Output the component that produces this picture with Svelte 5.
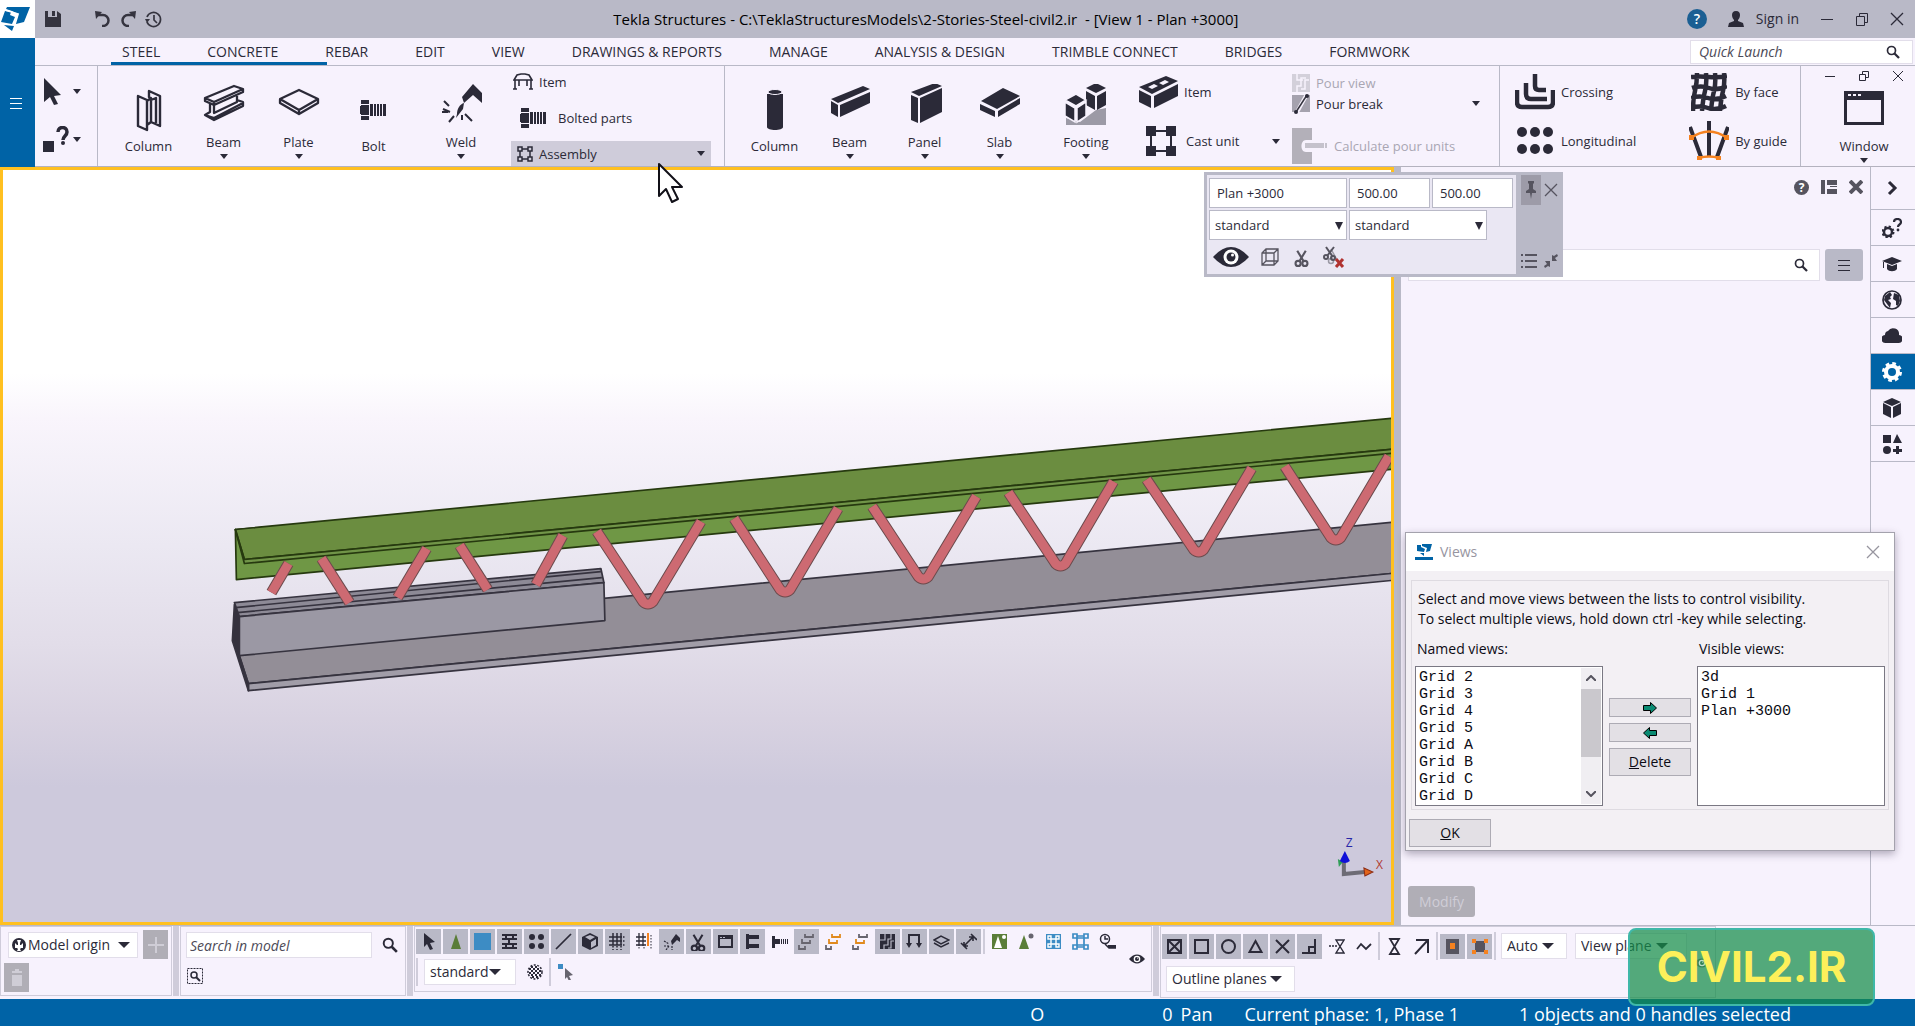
<script>
  const tabs = ['STEEL', 'CONCRETE', 'REBAR', 'EDIT', 'VIEW', 'DRAWINGS & REPORTS', 'MANAGE', 'ANALYSIS & DESIGN', 'TRIMBLE CONNECT', 'BRIDGES', 'FORMWORK'];

  const steelTools = [
    { name: 'Column', icon: 'steelColumn' },
    { name: 'Beam', icon: 'steelBeam', menu: true },
    { name: 'Plate', icon: 'plate', menu: true },
    { name: 'Bolt', icon: 'bolt' },
    { name: 'Weld', icon: 'weld', menu: true, wide: true },
  ];

  const concreteTools = [
    { name: 'Column', icon: 'column' },
    { name: 'Beam', icon: 'beam', menu: true },
    { name: 'Panel', icon: 'panel', menu: true },
    { name: 'Slab', icon: 'slab', menu: true },
    { name: 'Footing', icon: 'footing', menu: true, wide: true },
  ];

  const switches = [
    ['pointer', 1, 'Select all'], ['cone', 1, 'Components'], ['blue', 1, 'Parts'], ['mesh', 1, 'Surfaces'],
    ['dots', 1, 'Points'], ['slash', 1, 'Lines'], ['cube', 1, 'Reference models'], ['grid', 1, 'Grids'],
    ['gridLine', 0, 'Grid lines'], ['torch', 1, 'Welds'], ['cut', 1, 'Cuts'], ['view', 1, 'Views'],
    ['fitting', 1, 'Bolt groups'], ['screw', 0, 'Single bolts'], ['steps', 1, 'Rebar sets'], ['stepsA', 0, 'Rebar groups'],
    ['stepsB', 0, 'Single bars'], ['pour', 1, 'Pours'], ['loads', 1, 'Loads'], ['layers', 1, 'Planes'], ['distance', 1, 'Distances'],
  ];

  const modes = [
    ['coneBox', 'Components'], ['coneDot', 'Objects in components'], ['asmBox', 'Assemblies'],
    ['asm', 'Objects in assemblies'], ['task', 'Tasks'],
  ];

  const snaps = [
    ['snapRef', 1, 'Points'], ['snapEnd', 1, 'End points'], ['snapCenter', 1, 'Centers'], ['snapMid', 1, 'Midpoints'],
    ['snapCross', 1, 'Intersections'], ['snapPerp', 1, 'Perpendicular'], ['snapExt', 0, 'Extensions'], ['snapFree', 0, 'Free'],
  ];

  const rail = [
    ['chevron', 'Collapse'], ['gearHelp', 'Help'], ['cap', 'Learning'], ['globe', 'Online'], ['cloud', 'Warehouse'],
    ['gear', 'Properties'], ['box', 'Reference models'], ['shapes', 'Applications'],
  ];

  const namedViews = ['Grid 2', 'Grid 3', 'Grid 4', 'Grid 5', 'Grid A', 'Grid B', 'Grid C', 'Grid D'];
  const visibleViews = ['3d', 'Grid 1', 'Plan +3000'];

  // diagonals of the truss, drawn twice: outline then fill
  const rods = [
    'M289 563L272 592', 'M322 558L350 602', 'M427 548L398 597', 'M460 545L488 589', 'M563 535L536 584',
    'M597 531L643 601Q648 606 653 601L701 521', 'M734 518L780 589Q785 594 790 589L838 508',
    'M872 506L918 576Q923 581 928 576L976 496', 'M1008 492L1055 563Q1060 568 1065 563L1113 481',
    'M1146 479L1193 549Q1198 554 1203 549L1251 468', 'M1284 466L1330 537Q1335 542 1340 537L1388 456',
  ];

  const scissors = '<circle cx="6" cy="17" r="3"/><circle cx="14" cy="17" r="3"/><path d="M5 2l7.500 12.500M15 2L7.500 14.500"/>';

  // [width, height, body]
  const icons = {
    logo: [29, 24, '<path fill="#0063a6" d="M6 0h23l-6 15-8 2-1-2 3-8-6-3-6-2zM4 4l6 1-1 3 5 2-3 7-11-2zM3 18l10 1-2 5z"/><path fill="none" stroke="#fff" stroke-width="1.800" d="M4 3l13 4-3 10"/>'],
    save: [16, 16, '<path d="M0 0h3v6h9V0l4 3v13H0z"/><path d="M7 0h3v5H7z"/>'],
    undo: [16, 16, '<path fill="none" stroke="currentColor" stroke-width="2.500" d="M3 4h5a5 5 0 1 1 0 11H7"/><path d="M0 0l7 1-6 7z"/>'],
    redo: [16, 16, '<path fill="none" stroke="currentColor" stroke-width="2.500" d="M13 4H8a5 5 0 1 0 0 11h1"/><path d="M16 0L9 1l6 7z"/>'],
    history: [17, 17, '<path fill="none" stroke="currentColor" stroke-width="1.700" d="M2 6a7 7 0 1 1 0 5M9 4v5l3 3"/><path d="M0 8h5L2 12z"/>'],
    person: [16, 16, '<path d="M8 0c3 0 4 2 4 4s-1 4-2 5v1l5 2 1 4H0l1-4 5-2V9C5 8 4 6 4 4s1-4 4-4z"/>'],
    arrowBig: [20, 27, '<path d="M1 0l17 17-7 1 4 8-4 1-4-8-6 5z"/>'],
    ask: [26, 26, '<path d="M0 15h11v11H0z"/><path fill="none" stroke="currentColor" stroke-width="3.500" d="M15 6c0-6 9-6 9 0 0 4-4 4-4 8"/><circle cx="20" cy="17" r="2"/>'],
    steelColumn: [48, 48, '<g fill="none" stroke="currentColor" stroke-width="2.400" stroke-linejoin="round"><path d="M13 10l9 4v30l-9-4zM24 5l11 5v30l-9-4V12l-2-1zM22 15l4-3M22 39l4-3M26 14l5-2v25"/></g>'],
    steelBeam: [48, 48, '<g fill="none" stroke="currentColor" stroke-width="2.300" stroke-linejoin="round"><path d="M5 14L34 2l9 3-29 13zM5 14v3l9 4v-3M14 21l29-13V5M10 19v9l-5 3 9 5 29-14v-4l-6-2M14 21v8l23-11v-6M5 31l9 3 29-15M14 34v2"/></g>'],
    plate: [48, 48, '<g fill="none" stroke="currentColor" stroke-width="2.300" stroke-linejoin="round"><path d="M5 15L24 6l19 9-19 11zM5 15v4l19 11 19-11v-4M24 26v4"/></g>'],
    bolt: [28, 20, '<path d="M1 0h8v4H1zM1 16h8v4H1zM1 5h8v10H1zM0 6h2v8H0zM10 4h3v12h-3zM14 4h2v12h-2zM17 4h2v12h-2zM20 4h2v12h-2zM23 4h3v12h-3z"/>'],
    weld: [48, 48, '<path d="M25 13L36 0l9 9v10l-9-8-9 8zM20 30c0-5 3-10 7-11l-1 6-7 9z"/><path fill="none" stroke="currentColor" stroke-width="2" d="M6 25l7 3M7 17l5 5M12 38l5-6M25 36v-5M28 30l7 7M5 28h6"/>'],
    item: [20, 17, '<g fill="none" stroke="currentColor" stroke-width="1.600"><path d="M1 7l3-5 4-1h4l4 1 3 5zM2 7v9M18 7v9M6 7v6M14 7v6"/><path d="M0 16h4M16 16h4"/></g>'],
    assembly: [16, 16, '<g fill="none" stroke="currentColor" stroke-width="1.500"><path d="M1 1h4v4H1zM11 1h4v4h-4zM1 11h4v4H1zM11 11h4v4h-4zM5 3h6M5 13h6M3 5v6M13 5v6"/></g>'],
    column: [48, 48, '<path d="M16 8h16v33c0 4-16 4-16 0z"/><ellipse cx="24" cy="6" rx="7" ry="2.500" stroke="#f7f2fd"/>'],
    beam: [48, 48, '<path d="M5 15L37 2l7 3-32 14zM5 17l7 4v12l-7-4zM14 21L44 8v11L14 33z"/>'],
    panel: [48, 48, '<path d="M10 8l24-9 7 3-23 10zM10 11l7 3v25l-7-3zM19 14L41 4v24L19 39z"/>'],
    slab: [48, 48, '<path d="M5 17L27 4l17 8-23 13zM4 20l15 7v6L4 26zM22 27l22-13v6L22 33z"/>'],
    footing: [48, 48, '<path fill="#9c9aa6" d="M4 34l14 4 16-12 10-2v17H4z"/><path d="M24 4l10-5 10 5-10 5zM24 7l9 5v14l-9-5zM35 12l9-5v14l-9 5z"/><path stroke="#f7f2fd" stroke-width="1.500" d="M3 16l11-6 10 6-10 6zM3 18l10 6v14L3 32zM15 24l9-6v14l-9 6z"/>'],
    brick: [40, 32, '<path d="M0 11L27 0l12 5-26 13zM0 14l12 6v12L0 26zM15 20L39 8v12L15 32z"/><path fill="#f7f2fd" d="M9 11l6-3 4 2-6 3zM20 7l6-3 4 2-6 3z"/>'],
    castUnit: [30, 30, '<path d="M0 0h10v10H0zM20 0h10v10H20zM0 20h10v10H0zM20 20h10v10H20z"/><path fill="none" stroke="currentColor" stroke-width="2" d="M5 5h20v20H5z"/>'],
    pourView: [18, 18, '<path fill="#d3d0da" d="M0 0h18v18H0z"/><path fill="none" stroke="#f7f2fd" stroke-width="1.500" d="M5 0v6h6M14 4H9v8H5v6M17 6h-4v9H9"/>'],
    pourBreak: [18, 20, '<path fill="#a5a2ae" d="M0 1h18v17H0z"/><path fill="none" stroke="#f7f2fd" stroke-width="4" d="M4 20L15 0"/><path fill="none" stroke="#35343f" stroke-width="1.500" d="M4 18L15 1"/><circle cx="4" cy="18" r="2"/><circle cx="15" cy="2" r="2"/>'],
    calc: [36, 36, '<path fill="#b3b0b9" d="M0 0h20v12h-6c-6 0-6 12 0 12h6v12H0z"/><path fill="#c5c2cc" d="M13 15h19v5H13zM33 15h2v5h-2z"/>'],
    crossing: [40, 36, '<g fill="none" stroke="currentColor" stroke-width="4.500"><path d="M2 16v12q0 5 5 5h26q5 0 5-5V16"/><path d="M11 9v11q0 5 5 5h16"/><path d="M20 0v12q0 4 4 4h7"/></g>'],
    longitudinal: [36, 28, '<circle cx="5" cy="5" r="5"/><circle cx="18" cy="5" r="5"/><circle cx="31" cy="5" r="5"/><circle cx="5" cy="22" r="5"/><circle cx="18" cy="22" r="5"/><circle cx="31" cy="22" r="5"/>'],
    byFace: [36, 38, '<path fill="none" stroke="currentColor" stroke-width="4.500" d="M6 0Q6 10 4 18T2 38M15 0q1 10-1 18t-3 20M24 0q1 10-1 18t-3 20M33 0q1 10-1 18t-3 20M0 4q9-1 18 0t18-1M1 15q9-3 17 0t18-2M0 25q9-3 17 0t18-2M0 35q9-3 17 0t18-2"/>'],
    byGuide: [40, 40, '<path fill="none" stroke="currentColor" stroke-width="4" d="M20 0v36M1 6l11 30M39 6L28 36"/><path fill="none" stroke="#f58220" stroke-width="2.500" d="M2 17q18-13 36 0M10 37q10-3 20 0"/><path fill="#f58220" d="M0 14h5v5H0zM35 14h5v5h-5zM8 35h5v4H8zM27 35h5v4h-5z"/>'],
    windowBig: [40, 34, '<path d="M0 0h40v34H0z"/><path fill="#f7f2fd" d="M3 9h34v22H3zM4 3h3v2H4zM9 3h3v2H9zM14 3h3v2h-3z"/>'],
    min: [14, 14, '<path d="M1 7h12v1H1z"/>'],
    restore: [14, 14, '<path fill="none" stroke="currentColor" d="M1.500 4.500h8v9h-8zM4.500 4V1.500h8v9H10"/>'],
    close: [14, 14, '<path fill="none" stroke="currentColor" stroke-width="1.300" d="M1 1l12 12M13 1L1 13"/>'],
    minSmall: [10, 10, '<path d="M0 5h10v1H0z"/>'],
    restoreSmall: [10, 10, '<path fill="none" stroke="currentColor" d="M.5 3.500h6v6h-6zM3.500 3V.5h6v6H7"/>'],
    closeSmall: [10, 10, '<path fill="none" stroke="currentColor" d="M0 0l10 10M10 0L0 10"/>'],
    closeBold: [14, 14, '<path fill="none" stroke="currentColor" stroke-width="4" d="M1 1l12 12M13 1L1 13"/>'],
    panes: [16, 14, '<path d="M0 0h4v14H0zM6 0h10v5H6zM6 9h10v5H6zM9 6h7v1H9z"/>'],
    search: [14, 14, '<circle cx="5.500" cy="5.500" r="4" fill="none" stroke="currentColor" stroke-width="1.700"/><path stroke="currentColor" stroke-width="2.300" d="M8.500 8.500L13 13"/>'],
    bars: [12, 12, '<path d="M0 1h12v1H0zM0 6h12v1H0zM0 11h12v1H0z"/>'],
    pin: [10, 18, '<path d="M2 0h6v2L7 3v5l3 2v2H6l-1 6-1-6H0v-2l3-2V3L2 2z"/>'],
    list: [16, 14, '<path d="M0 0h2v2H0zM4 0h12v2H4zM0 6h2v2H0zM4 6h12v2H4zM0 12h2v2H0zM4 12h12v2H4z"/>'],
    shrink: [14, 14, '<path d="M13 0l1 2-3 2 2 3H8V1l2 1zM1 14l-1-2 3-2-2-3h5v6l-2-1z"/>'],
    eye: [36, 20, '<path d="M0 10Q18-10 36 10 18 30 0 10z"/><circle cx="18" cy="10" r="7.500" fill="#fff"/><circle cx="18" cy="10" r="4.500"/><circle cx="19.500" cy="8" r="1.500" fill="#fff"/>'],
    cubeWire: [18, 18, '<path fill="none" stroke="currentColor" stroke-width="1.300" d="M1 5l4-4h12v12l-4 4H1zM1 5h12v12M13 5l4-4M5 1v12h12M5 13l-4 4"/>'],
    scissors: [20, 21, `<g fill="none" stroke="currentColor" stroke-width="2.500" transform="translate(2 2) scale(.85)">${scissors}</g>`],
    scissorsX: [24, 23, '<g fill="none" stroke="#9a98a3" stroke-width="1.500"><circle cx="8" cy="15" r="2.500"/><path d="M8 3l6 11"/></g><g fill="none" stroke="currentColor" stroke-width="2"><circle cx="3" cy="11" r="2"/><circle cx="10" cy="12" r="2"/><path d="M3 1l7 10M11 1L4 10"/></g><path stroke="#b0322f" stroke-width="3" d="M13 13l7 8M20 13l-7 8"/>'],
    chevron: [20, 20, '<path fill="none" stroke="currentColor" stroke-width="3" d="M7 4l6 6-6 6"/>'],
    gearHelp: [20, 20, '<circle cx="6" cy="14" r="4" fill="none" stroke="currentColor" stroke-width="2.500"/><circle cx="6" cy="14" r="5.500" fill="none" stroke="currentColor" stroke-width="2" stroke-dasharray="2.200 2.120"/><path fill="none" stroke="currentColor" stroke-width="2.200" d="M12 4c0-4 7-4 7 0 0 3-3 2-3 5"/><circle cx="16" cy="12" r="1.400"/>'],
    cap: [20, 20, '<path d="M0 7l10-4 10 4-10 4zM5 10l5 2 5-2v5c-2 3-8 3-10 0zM1 8h1v6H1z"/>'],
    globe: [20, 20, '<circle cx="10" cy="10" r="9" fill="none" stroke="currentColor" stroke-width="1.700"/><path d="M3 6l5-4 2 3-2 2 1 2-3 1 3 3-1 5-3-4-3-4zM12 3l5 2 1 6-2 5-2-1v-4l-3-2z"/>'],
    cloud: [20, 20, '<path d="M4 17a4 4 0 0 1-1-8 4 4 0 0 1 3-4 6 6 0 0 1 11 4 4 4 0 0 1-1 8z"/>'],
    gear: [20, 20, '<circle cx="10" cy="10" r="6" fill="none" stroke="currentColor" stroke-width="4"/><circle cx="10" cy="10" r="8.500" fill="none" stroke="currentColor" stroke-width="3" stroke-dasharray="3.600 3.076"/>'],
    box: [20, 20, '<path d="M10 0l9 4-9 4-9-4zM1 5l8 4v11l-8-4zM11 9l8-4v11l-8 4z"/>'],
    shapes: [20, 20, '<path d="M1 1h8v8H1zM15 0l5 9H11zM14 12h3v3h3v3h-3v3h-3v-3h-3v-3h3z"/><circle cx="5" cy="16" r="4"/>'],
    arrowR: [14, 12, '<path fill="#0a8a72" stroke="#000" d="M.5 3.500h7v-3l6 5.500-6 5.500v-3h-7z"/>'],
    arrowL: [14, 12, '<path fill="#0a8a72" stroke="#000" d="M13.500 3.500h-7v-3L.5 6l6 5.500v-3h7z"/>'],
    origin: [14, 14, '<circle cx="7" cy="7" r="7"/><path fill="#fff" d="M5 2h4L8 5v2h1l2-2v5H9l-1 1 1 2H5l1-2-1-1H3V5l2 2h1V5z"/>'],
    plus: [16, 16, '<path d="M7 0h2v7h7v2H9v7H7V9H0V7h7z"/>'],
    trash: [12, 18, '<path d="M4 0h4v2h3v2H1V2h3zM1 6h10v11H1z"/>'],
    searchArea: [16, 16, '<path fill="none" stroke="currentColor" stroke-dasharray="2 1" d="M.5.500h15v15H.5z"/><circle cx="7" cy="7" r="3" fill="none" stroke="currentColor" stroke-width="1.500"/><path stroke="currentColor" stroke-width="2" d="M9 9l4 4"/>'],
    pointer: [19, 19, '<path d="M5 1l11 9-5 1 3 6-3 1-3-6-3 3z"/>'],
    cone: [16, 24, '<path fill="#5a7d38" d="M8 4l5 15H3z"/>'],
    blue: [19, 19, '<path fill="#3d8cc4" d="M1 1h17v17H1z"/>'],
    mesh: [17, 17, '<path fill="none" stroke="currentColor" stroke-width="2" d="M1 2h15M1 6h15M1 11h15M1 15h15M5 2v4M12 2v4M8 6v5M5 11v4M12 11v4"/>'],
    dots: [17, 17, '<circle cx="4" cy="4" r="3"/><circle cx="13" cy="4" r="3"/><circle cx="4" cy="13" r="3"/><circle cx="13" cy="13" r="3"/>'],
    slash: [17, 17, '<path stroke="currentColor" stroke-width="1.700" d="M1 16L16 1"/>'],
    cube: [17, 17, '<path d="M8 0l8 4v9l-8 4-8-4V4z"/><path fill="#b9b9c7" d="M8 2l5 2-5 3-5-3zM9 9l5-3v6l-5 3z"/>'],
    grid: [17, 17, '<path fill="none" stroke="currentColor" stroke-width="1.500" d="M4 0v12M8 0v12M12 0v12M0 4h13M0 8h13M0 12h13"/><path fill="none" stroke="currentColor" stroke-width="1.500" stroke-dasharray="1.500 1.500" d="M4 13v4M8 13v4M12 13v4M14 4h3M14 8h3M14 12h3"/>'],
    gridLine: [17, 17, '<path fill="none" stroke="currentColor" stroke-width="1.300" d="M3 0v13M7 0v13M0 4h10M0 8h10M0 12h10"/><path stroke="#f58220" stroke-width="2" d="M12 0v13"/><path stroke="currentColor" stroke-dasharray="1.500 1.500" d="M15 2v14M3 14v3M8 14v3"/>'],
    torch: [17, 17, '<path d="M8 8l5-7 4 4v4l-3-2-5 5z"/><path fill="none" stroke="currentColor" stroke-width="1.200" stroke-dasharray="2 1" d="M1 8l5 3M1 13h5M3 17l3-4M9 13v4"/>'],
    cut: [17, 18, `<g fill="none" stroke="currentColor" stroke-width="2.300" transform="translate(-1) scale(.9)">${scissors}</g>`],
    view: [17, 17, '<path d="M1 2h15v13H1z"/><path fill="#b9b9c7" d="M3 6h11v7H3zM3 4h2v1H3zM6 4h2v1H6z"/>'],
    fitting: [17, 17, '<path d="M2 1h3v15H2zM5 2h10v4H5zM5 11h10v4H5z"/>'],
    screw: [17, 17, '<path d="M1 3h3v12H1zM4 6h5v5H4zM10 6h1v5h-1zM12 6h1v5h-1zM14 6h1v5h-1zM16 6h1v5h-1z"/>'],
    steps: [17, 17, '<path fill="none" stroke="#67656f" stroke-width="1.800" d="M7 1v3h8V1M4 6v4h8V7M1 12v4h6v-3"/>'],
    stepsA: [17, 17, '<path fill="none" stroke="#e08a1e" stroke-width="1.800" d="M7 1v3h8V1M4 6v4h8V7"/><path fill="none" stroke="#67656f" stroke-width="1.800" d="M1 12v4h5v-3"/>'],
    stepsB: [17, 17, '<path fill="none" stroke="#e08a1e" stroke-width="1.800" d="M4 6v4h8V7"/><path fill="none" stroke="#67656f" stroke-width="1.800" d="M7 1v3h8V1M1 12v4h5v-3"/>'],
    pour: [17, 17, '<path d="M1 1h15v15H1z"/><path fill="none" stroke="#b9b9c7" stroke-width="1.200" d="M6 1v6H1M12 1v5H9v6H5v4M15 8h-3v7H9"/>'],
    loads: [17, 17, '<path fill="none" stroke="currentColor" stroke-width="2" d="M3 12V2h10v10"/><path d="M0 10h6l-3 5zM10 10h6l-3 5z"/>'],
    layers: [17, 17, '<path fill="none" stroke="currentColor" stroke-width="1.500" d="M1 7l7-4 8 4-8 4zM1 10l7 4 8-4"/>'],
    distance: [17, 17, '<path fill="none" stroke="currentColor" stroke-width="1.600" d="M4 13L13 4M1 10l6 6M11 1l6 6M4 9v4h4M9 4h4v4"/>'],
    coneBox: [17, 17, '<path fill="#5a7d38" d="M1 1h15v15H1z"/><path fill="#fff" d="M7 3l4 12H3z"/><circle cx="13" cy="4" r="2" fill="#fff"/>'],
    coneDot: [17, 17, '<path fill="#5a7d38" d="M6 2l5 14H1z"/><circle cx="13" cy="3" r="2.500" fill="#67656f"/>'],
    asmBox: [17, 17, '<path fill="#3d8cc4" d="M1 1h15v15H1z"/><path fill="none" stroke="#fff" stroke-width="1.400" d="M3 3h3v3H3zM11 3h3v3h-3zM3 11h3v3H3zM11 11h3v3h-3zM6 6h5v5H6z"/>'],
    asm: [17, 17, '<path fill="none" stroke="#3d8cc4" stroke-width="1.700" d="M1 1h4v4H1zM12 1h4v4h-4zM1 12h4v4H1zM12 12h4v4h-4zM5 5h7v7H5zM5 3h7M5 14h7"/>'],
    task: [17, 17, '<circle cx="6" cy="6" r="4.500" fill="none" stroke="currentColor" stroke-width="1.500"/><path fill="none" stroke="currentColor" stroke-width="1.500" d="M6 3v3h3M6 11l4 4h7"/><path d="M9 12h8v3H9z"/>'],
    sphere: [16, 16, '<circle cx="8" cy="8" r="7" fill="none" stroke="currentColor" stroke-width="1.500" stroke-dasharray="2 1.500"/><path fill="none" stroke="currentColor" stroke-width="2" stroke-dasharray="2 2" d="M2 5h12M4 7h10M2 9h12M4 11h10M4 3h8M5 13h8"/>'],
    pick: [16, 16, '<path fill="#3d8cc4" d="M0 0h5v5H0z"/><path fill="#67656f" d="M7 4l8 7-4 1 2 4-2 1-2-4-2 2z"/>'],
    snapRef: [17, 17, '<path fill="none" stroke="currentColor" stroke-width="2" d="M2 2h13v13H2zM2 2l13 13M15 2L2 15"/>'],
    snapEnd: [17, 17, '<path fill="none" stroke="currentColor" stroke-width="2" d="M2 2h13v13H2z"/>'],
    snapCenter: [17, 17, '<circle cx="8.500" cy="8.500" r="6.500" fill="none" stroke="currentColor" stroke-width="2"/>'],
    snapMid: [17, 17, '<path fill="none" stroke="currentColor" stroke-width="2" d="M8.500 3l6 11h-12z"/>'],
    snapCross: [17, 17, '<path fill="none" stroke="currentColor" stroke-width="2" d="M2 2l13 13M15 2L2 15"/>'],
    snapPerp: [17, 17, '<path fill="none" stroke="currentColor" stroke-width="2" d="M14 1v14H1M8 15V9h6"/>'],
    snapExt: [17, 17, '<path fill="none" stroke="currentColor" stroke-width="1.400" d="M8 2h8L8 15h8zM1 8h2M4 8h2M7 8h2"/>'],
    snapFree: [17, 17, '<path fill="none" stroke="currentColor" stroke-width="1.800" d="M2 11l4-5 5 5 5-5"/>'],
    snapNear: [17, 17, '<path fill="none" stroke="currentColor" stroke-width="1.800" d="M4 1h9L4 16h9z"/>'],
    snapLine: [17, 17, '<path fill="none" stroke="currentColor" stroke-width="2" d="M3 2h12v13M15 2L2 16"/>'],
    snapMain: [17, 17, '<path fill="#56545f" d="M2 1h13v15H2z"/><path fill="#f58220" d="M6 5h5v6H6z"/>'],
    snapGeo: [17, 17, '<path fill="#56545f" d="M4 3h10v11H4z"/><path fill="#f58220" d="M1 1h4v4H1zM13 1h4v4h-4zM1 12h4v4H1zM13 12h4v4h-4z"/>'],
  };
</script>

{#snippet icon(name, cls = '')}
  <svg class={cls} width={icons[name][0]} height={icons[name][1]} viewBox="0 0 {icons[name][0]} {icons[name][1]}" fill="currentColor" aria-hidden="true">{@html icons[name][2]}</svg>
{/snippet}

{#snippet tool(t)}
  <button class="tool" class:wide={t.wide} class:menu={t.menu}>
    <span class="pic">{@render icon(t.icon)}</span>
    <span>{t.name}</span>
    {#if t.menu}<i class="caret"></i>{/if}
  </button>
{/snippet}

{#snippet combo(label, value, cls = '')}
  <span class="combo {cls}">
    <select aria-label={label}><option>{value}</option></select>
    <i class="caret big"></i>
  </span>
{/snippet}

<div class="app">
  <header class="titlebar">
    <span class="logo">{@render icon('logo')}</span>
    <div class="quick">
      <button aria-label="Save" class="save">{@render icon('save')}</button>
      <button aria-label="Undo">{@render icon('undo')}</button>
      <button aria-label="Redo">{@render icon('redo')}</button>
      <button aria-label="History">{@render icon('history')}</button>
    </div>
    <h1>Tekla Structures - C:\TeklaStructuresModels\2-Stories-Steel-civil2.ir&nbsp; - [View 1 - Plan +3000]</h1>
    <div class="session">
      <button class="help" aria-label="Help">?</button>
      <button class="sign">{@render icon('person')}<span>Sign in</span></button>
      <button aria-label="Minimize">{@render icon('min')}</button>
      <button aria-label="Restore">{@render icon('restore')}</button>
      <button aria-label="Close">{@render icon('close')}</button>
    </div>
  </header>

  <div class="top">
    <button class="filemenu" aria-label="File menu">{@render icon('bars')}</button>
    <div class="topmain">
      <nav class="tabs">
        {#each tabs as tab}
          <a href="#{tab}">{tab}</a>
        {/each}
        <i class="marker"></i>
        <label class="launch"><input placeholder="Quick Launch" aria-label="Quick Launch" />{@render icon('search')}</label>
      </nav>

      <div class="ribbon">
        <section class="pickers">
          <button aria-label="Select">{@render icon('arrowBig')}<i class="caret"></i></button>
          <button aria-label="Inquire">{@render icon('ask')}<i class="caret"></i></button>
        </section>

        <section class="steel">
          {#each steelTools as t}{@render tool(t)}{/each}
          <div class="stack">
            <button class="row">{@render icon('item')}<span>Item</span></button>
            <button class="row indent">{@render icon('bolt')}<span>Bolted parts</span></button>
            <button class="row hot">{@render icon('assembly')}<span>Assembly</span><i class="caret"></i></button>
          </div>
        </section>

        <section class="concrete">
          {#each concreteTools as t}{@render tool(t)}{/each}
          <div class="pair cast">
            <button>{@render icon('brick')}<span>Item</span></button>
            <button class="castunit">{@render icon('castUnit')}<span>Cast unit</span><i class="caret"></i></button>
          </div>
          <div class="pours">
            <button disabled>{@render icon('pourView')}<span>Pour view</span></button>
            <button>{@render icon('pourBreak')}<span>Pour break</span><i class="caret"></i></button>
            <button disabled class="calc">{@render icon('calc')}<span>Calculate pour units</span></button>
          </div>
        </section>

        <section class="rebar">
          <div class="pair">
            <button><span class="slot">{@render icon('crossing')}</span><span>Crossing</span></button>
            <button><span class="slot">{@render icon('longitudinal')}</span><span>Longitudinal</span></button>
          </div>
          <div class="pair">
            <button><span class="slot">{@render icon('byFace')}</span><span>By face</span></button>
            <button><span class="slot">{@render icon('byGuide')}</span><span>By guide</span></button>
          </div>
        </section>

        <section class="window">
          <div class="mdi">
            <button aria-label="Minimize view">{@render icon('minSmall')}</button>
            <button aria-label="Restore view">{@render icon('restoreSmall')}</button>
            <button aria-label="Close view">{@render icon('closeSmall')}</button>
          </div>
          <button class="winbtn">{@render icon('windowBig')}<span>Window</span><i class="caret"></i></button>
        </section>
      </div>
    </div>
  </div>

  <main class="work">
    <div class="viewport">
      <svg class="model" viewBox="3 170 1388 751" preserveAspectRatio="xMidYMid slice" aria-label="Truss model">
        <g stroke="#36333f" stroke-width="1.700" stroke-linejoin="round">
          <path fill="#938e97" d="M240 633L1400 521V572L249 683L240 655z" />
          <path fill="#a19da8" d="M249 683L1400 572V579L249 690z" />
          <path fill="#34313d" d="M235 604L240 616V655L249 683V690L233 640z" />
          <path fill="#8d8a96" d="M235 602L601 568L604 582L240 616z" />
          <path fill="none" d="M236 607L601 571M238 612L602 577" />
          <path fill="#9b98a4" d="M240 616L604 582L605 620L240 655z" />
        </g>
        <g stroke="#26390f" stroke-width="1.700" stroke-linejoin="round">
          <path fill="#6f9745" d="M236 529L237 579L1400 468V440z" />
          <path fill="#6b8d40" d="M236 529L1400 417V448L245 559z" />
          <path fill="#719548" d="M245 559L1400 448V452L245 563L236 529z" />
        </g>
        <g fill="none" stroke-linejoin="round">
          {#each rods as d}
            <path {d} stroke="#6b4a4c" stroke-width="11" />
            <path {d} stroke="#cd6a72" stroke-width="9" />
          {/each}
        </g>
        <path fill="none" stroke="#6d6b75" stroke-width="4" d="M1343 856V873L1364 871" />
        <path fill="#2f9e58" d="M1337 858l5 3-4 5z" />
        <path fill="#1010d8" d="M1344 850l5 10q-5 4-10 0z" />
        <path fill="#e2641a" stroke="#8c2c14" d="M1363 867l9 4-8 4z" />
        <text x="1345" y="846" fill="#2626a8">Z</text>
        <text x="1375" y="868" fill="#b03a30">X</text>
      </svg>
    </div>
    <i class="splitter"></i>

    <aside class="props">
      <div class="propshead">
        <span class="qmark">?</span>
        {@render icon('panes')}
        {@render icon('closeBold')}
      </div>
      <div class="propsearch">
        <label><input aria-label="Search properties" />{@render icon('search')}</label>
        <button aria-label="Options">{@render icon('bars')}</button>
      </div>
      <button class="modify" disabled>Modify</button>
    </aside>

    <nav class="rail">
      {#each rail as [name, label]}
        <button aria-label={label} class:active={name === 'gear'}>{@render icon(name)}</button>
      {/each}
    </nav>

    <form class="floatbar">
      <div class="fields">
        <div class="frow">
          <input class="name" aria-label="View name" value="Plan +3000" />
          <input aria-label="Depth up" value="500.00" />
          <input aria-label="Depth down" value="500.00" />
        </div>
        <div class="frow">
          {@render combo('View properties', 'standard')}
          {@render combo('Visibility', 'standard')}
        </div>
        <div class="frow icons">
          {@render icon('eye')}
          {@render icon('cubeWire')}
          {@render icon('scissors')}
          {@render icon('scissorsX')}
        </div>
      </div>
      <div class="handle">
        <div><span class="pinned">{@render icon('pin')}</span>{@render icon('close')}</div>
        <div>{@render icon('list')}{@render icon('shrink')}</div>
      </div>
    </form>

    <div class="dialog" role="dialog" aria-label="Views">
      <div class="dlgtitle">
        <span class="mini"><svg width="18" height="12" viewBox="0 0 18 12"><path fill="#0063a6" d="M7 0h10l-2 7-4 1 1-4-5-2zM2 1h4v2l4 2-1 3-7-1zM5 9h4v3z" /></svg></span>
        <span>Views</span>
        <button aria-label="Close dialog">{@render icon('close')}</button>
      </div>
      <div class="dlgbody">
        <p>Select and move views between the lists to control visibility.<br />To select multiple views, hold down ctrl -key while selecting.</p>
        <div class="lists">
          <div>
            <label for="named">Named views:</label>
            <div class="listbox">
              <select id="named" multiple size="8">
                {#each namedViews as v}<option>{v}</option>{/each}
              </select>
              <div class="scroll">
                <svg width="10" height="6" viewBox="0 0 10 6"><path fill="none" stroke="#55535e" stroke-width="2" d="M0 6l5-5 5 5" /></svg>
                <i></i>
                <svg width="10" height="6" viewBox="0 0 10 6"><path fill="none" stroke="#55535e" stroke-width="2" d="M0 0l5 5 5-5" /></svg>
              </div>
            </div>
          </div>
          <div class="moves">
            <button class="btn slim" aria-label="Show view">{@render icon('arrowR')}</button>
            <button class="btn slim" aria-label="Hide view">{@render icon('arrowL')}</button>
            <button class="btn"><u>D</u>elete</button>
          </div>
          <div>
            <label for="visible">Visible views:</label>
            <div class="listbox">
              <select id="visible" multiple size="8">
                {#each visibleViews as v}<option>{v}</option>{/each}
              </select>
            </div>
          </div>
        </div>
      </div>
      <button class="btn ok"><u>O</u>K</button>
    </div>

    <svg class="cursor" width="28" height="42" viewBox="0 0 28 42" aria-hidden="true">
      <path fill="#fff" stroke="#111018" stroke-width="2" stroke-linejoin="round" d="M2 2V34L9 27L15 40L21 37L15 25L25 25z" />
    </svg>
  </main>

  <footer class="bars">
    <div class="bar origin">
      <div class="line">
        <span class="withicon">{@render icon('origin')}{@render combo('Work plane', 'Model origin')}</span>
        <button class="off" aria-label="Add" disabled>{@render icon('plus')}</button>
      </div>
      <button class="off" aria-label="Remove" disabled>{@render icon('trash')}</button>
    </div>
    <i class="grip"></i>
    <div class="bar find">
      <div class="line">
        <input placeholder="Search in model" aria-label="Search in model" />
        {@render icon('search', 'lens')}
      </div>
      {@render icon('searchArea', 'area')}
    </div>
    <i class="grip"></i>
    <div class="bar select">
      <div class="rows">
        <div class="line">
          {#each switches as [name, on, label]}
            <button class="sw" class:on aria-label={label}>{@render icon(name)}</button>
          {/each}
          <i class="sep"></i>
          {#each modes as [name, label]}
            <button class="sw" aria-label={label}>{@render icon(name)}</button>
          {/each}
        </div>
        <div class="line second">
          <i class="sep"></i>
          {@render combo('Selection filter', 'standard', 'filter')}
          <button class="sw" aria-label="Filter settings">{@render icon('sphere')}</button>
          <i class="sep"></i>
          <button class="sw" aria-label="Direct modification">{@render icon('pick')}</button>
        </div>
      </div>
      {@render icon('eye', 'eyesmall')}
    </div>
    <i class="grip"></i>
    <div class="bar snap">
      <div class="line">
        {#each snaps as [name, on, label]}
          <button class="sw" class:on aria-label={label}>{@render icon(name)}</button>
        {/each}
        <i class="sep"></i>
        <button class="sw" aria-label="Nearest">{@render icon('snapNear')}</button>
        <button class="sw" aria-label="Lines">{@render icon('snapLine')}</button>
        <i class="sep"></i>
        <button class="sw on" aria-label="Reference lines">{@render icon('snapMain')}</button>
        <button class="sw on" aria-label="Geometry">{@render icon('snapGeo')}</button>
        <i class="sep"></i>
        {@render combo('Snap depth', 'Auto', 'auto')}
        {@render combo('Plane', 'View plane', 'plane')}
      </div>
      {@render combo('Plane type', 'Outline planes', 'outline')}
    </div>
    <div class="badge">{@render icon('eye', 'eyesmall')}<span>CIVIL2.IR</span></div>
  </footer>

  <div class="status">
    <span>O</span><span>0</span><span>Pan</span><span>Current phase: 1, Phase 1</span><span>1 objects and 0 handles selected</span>
  </div>
</div>

<style>
  :global(body) {
    margin: 0;
    overflow: hidden;
  }

  .app {
    --bg: #f7f2fd;
    --grey: #b9b9c7;
    --blue: #0063a6;
    --ink: #2b2a38;
    display: flex;
    flex-direction: column;
    height: 100vh;
    background: var(--bg);
    color: var(--ink);
    font: 13px/20px 'Open Sans', 'Noto Sans', sans-serif;
  }

  .app * {
    box-sizing: border-box;
  }

  button, input, select {
    font: inherit;
    color: inherit;
    margin: 0;
    padding: 0;
    border: 0;
    background: none;
    border-radius: 0;
    appearance: none;
    outline: none;
  }

  button {
    display: flex;
    align-items: center;
    justify-content: center;
    white-space: nowrap;
  }

  svg {
    display: block;
    flex: none;
  }

  .caret {
    border: 4px solid transparent;
    border-top: 5px solid #2b2a38;
    border-bottom: 0;
  }

  .caret.big {
    border-width: 6px 6px 0;
  }

  /* title bar */
  .titlebar {
    display: flex;
    align-items: center;
    flex: none;
    height: 38px;
    background: var(--grey);
    font-size: 14px;
  }

  .logo {
    display: flex;
    align-items: center;
    justify-content: center;
    width: 35px;
    height: 38px;
    padding-right: 4px;
    background: #fff;
  }

  .quick {
    display: flex;
    gap: 9px;
    width: 130px;
    padding-left: 10px;
    color: #35343f;
  }

  .save {
    margin-right: 25px;
  }

  h1 {
    flex: 1;
    margin: 0;
    font-size: 15px;
    font-weight: 400;
    color: #000;
    text-align: center;
  }

  .session {
    display: flex;
    align-items: center;
    gap: 21px;
    padding-right: 11px;
  }

  .help {
    width: 20px;
    height: 20px;
    border-radius: 50%;
    background: #1b5f93;
    color: #fff;
    font-weight: 600;
  }

  .sign {
    gap: 12px;
  }

  /* tabs and ribbon */
  .top {
    display: flex;
    flex: none;
  }

  .filemenu {
    width: 35px;
    padding-right: 4px;
    background: var(--blue);
    color: #fff;
  }

  .topmain {
    flex: 1;
    border-bottom: 1px solid #b4b2bf;
  }

  .tabs {
    position: relative;
    display: flex;
    align-items: center;
    gap: 1px;
    height: 28px;
    padding: 1px 2px 0 64px;
    border-bottom: 1px solid var(--grey);
    font-size: 14px;
  }

  .tabs a {
    padding: 0 23px;
    color: inherit;
    text-decoration: none;
    white-space: nowrap;
  }

  .marker {
    position: absolute;
    left: 76px;
    bottom: 0;
    width: 216px;
    height: 3px;
    background: var(--blue);
  }

  .launch {
    display: flex;
    align-items: center;
    width: 223px;
    height: 24px;
    margin-left: auto;
    padding: 0 12px 0 8px;
    background: #fff;
    border: 1px solid #e2deea;
  }

  .launch input {
    flex: 1;
    min-width: 0;
  }

  input::placeholder {
    color: #4c4a57;
    font-style: italic;
    opacity: 1;
  }

  .ribbon {
    display: flex;
    height: 100px;
  }

  .ribbon section {
    display: flex;
    flex: none;
    border-right: 1px solid var(--grey);
  }

  .pickers {
    flex-direction: column;
    width: 63px;
    padding-top: 10px;
    gap: 18px;
  }

  .pickers button {
    justify-content: space-between;
    height: 30px;
    padding: 0 16px 0 8px;
  }

  .steel {
    width: 627px;
    padding-left: 13px;
  }

  .tool {
    flex-direction: column;
    justify-content: flex-start;
    width: 75px;
    padding-top: 18px;
  }

  .tool.wide {
    width: 98px;
  }

  .steel .tool.wide {
    width: 100px;
  }

  .pic {
    display: flex;
    align-items: center;
    justify-content: center;
    height: 52px;
  }

  .tool.menu .pic {
    height: 48px;
  }

  .tool .caret {
    margin-top: 2px;
  }

  .stack {
    display: flex;
    flex-direction: column;
    justify-content: space-between;
    width: 200px;
    padding-top: 3px;
  }

  .row {
    justify-content: flex-start;
    height: 25px;
    gap: 6px;
    padding: 0 6px 0 2px;
  }

  .row.indent {
    padding-left: 9px;
    gap: 10px;
  }

  .row.hot {
    background: #cfccda;
    padding-left: 6px;
  }

  .row .caret, .pours .caret, .cast .caret {
    margin-left: auto;
  }

  .concrete {
    width: 775px;
    padding-left: 12px;
  }

  .pair {
    display: flex;
    flex-direction: column;
    gap: 7px;
    padding-top: 5px;
  }

  .pair button {
    justify-content: flex-start;
    height: 42px;
    gap: 5px;
  }

  .cast {
    width: 155px;
    padding-left: 4px;
  }

  .cast .castunit {
    gap: 10px;
    padding: 0 10px 0 7px;
  }

  .pours {
    width: 194px;
    padding-top: 6px;
    padding-left: 2px;
  }

  .pours button {
    justify-content: flex-start;
    width: 100%;
    height: 21px;
    gap: 6px;
    padding-right: 4px;
  }

  .pours .calc {
    height: 36px;
    margin-top: 14px;
  }

  button:disabled {
    color: #a9a6b3;
  }

  .rebar {
    width: 301px;
    padding-left: 14px;
    justify-content: space-between;
    padding-right: 13px;
  }

  .slot {
    display: flex;
    justify-content: center;
    width: 42px;
  }

  .ribbon .window {
    flex: 1;
    flex-direction: column;
    align-items: center;
    padding-left: 12px;
    border-right: 0;
  }

  .mdi {
    display: flex;
    gap: 24px;
    height: 20px;
  }

  .winbtn {
    flex-direction: column;
    padding-top: 5px;
  }

  .winbtn span {
    margin-top: 11px;
  }

  .winbtn .caret {
    margin-top: 2px;
  }

  /* model area */
  .work {
    position: relative;
    display: flex;
    flex: 1;
    min-height: 0;
  }

  .viewport {
    flex: 1;
    min-width: 0;
    border: 3px solid #ffc020;
    background: linear-gradient(#fff 0%, #fff 27%, #f9f5fc 33%, #ebe8f2 50%, #e2dde9 63%, #d8d2e1 73%, #cdc9dc 82%, #cdc9dc 100%);
  }

  .model {
    width: 100%;
    height: 100%;
  }

  .model text {
    font: 12px 'Open Sans', sans-serif;
  }

  .splitter {
    width: 7px;
    background: var(--grey);
  }

  .props {
    display: flex;
    flex-direction: column;
    width: 469px;
    padding: 0 7px 8px;
  }

  .propshead {
    display: flex;
    align-items: center;
    justify-content: flex-end;
    gap: 12px;
    height: 40px;
    margin-bottom: 42px;
    color: #56545f;
  }

  .qmark {
    width: 15px;
    height: 15px;
    border-radius: 50%;
    background: #56545f;
    color: #fff;
    font-size: 12px;
    font-weight: 700;
    line-height: 15px;
    text-align: center;
  }

  .propsearch {
    display: flex;
    gap: 5px;
    height: 32px;
  }

  .propsearch label {
    display: flex;
    flex: 1;
    align-items: center;
    padding-right: 11px;
    background: #fff;
    border: 1px solid #e2deea;
  }

  .propsearch input {
    flex: 1;
  }

  .propsearch button {
    width: 38px;
    background: var(--grey);
    border-radius: 3px;
  }

  .modify {
    width: 67px;
    height: 31px;
    margin-top: auto;
    border-radius: 3px;
    background: #b0aeb6;
    font-size: 14px;
  }

  .modify:disabled {
    color: #cfcdd6;
  }

  .rail {
    width: 45px;
    border-left: 1px solid var(--grey);
  }

  .rail button {
    width: 100%;
    height: 36px;
    padding-right: 2px;
    border-bottom: 1px solid var(--grey);
  }

  .rail button:first-child {
    height: 43px;
  }

  .rail .active {
    background: var(--blue);
    color: #fff;
  }

  /* floating view toolbar */
  .floatbar {
    position: absolute;
    top: 5px;
    right: 352px;
    display: flex;
    width: 359px;
    height: 105px;
    border: 3px solid var(--grey);
    background: #eae7f3;
  }

  .fields {
    flex: 1;
    padding: 3px 2px;
  }

  .frow {
    display: flex;
    gap: 2px;
    height: 30px;
    margin-bottom: 2px;
  }

  .frow input {
    width: 81px;
    padding-left: 7px;
    background: #fff;
    border: 1px solid var(--grey);
  }

  .frow .name {
    width: 138px;
  }

  .frow .combo {
    width: 138px;
    border-color: var(--grey);
    height: 30px;
  }

  .frow .combo .caret {
    right: 3px;
    border-width: 8px 4px 0;
  }

  .frow.icons {
    align-items: center;
    gap: 12px;
    padding-left: 4px;
    color: #56545f;
  }

  .frow.icons svg:first-child {
    color: var(--ink);
  }

  .handle {
    display: flex;
    flex-direction: column;
    justify-content: space-between;
    width: 44px;
    padding: 0 2px 6px 5px;
    background: var(--grey);
    color: #56545f;
  }

  .handle div {
    display: flex;
    align-items: center;
    justify-content: space-between;
  }

  .pinned {
    display: flex;
    align-items: center;
    justify-content: center;
    width: 20px;
    height: 30px;
    background: #9d9ba8;
  }

  .combo {
    position: relative;
    display: flex;
    height: 26px;
    background: #fff;
    border: 1px solid #e2deea;
  }

  .combo select {
    width: 100%;
    padding-left: 5px;
  }

  .combo .caret {
    position: absolute;
    right: 12px;
    top: calc(50% - 3px);
    pointer-events: none;
  }

  /* Views dialog */
  .dialog {
    position: absolute;
    top: 365px;
    right: 20px;
    width: 490px;
    padding-bottom: 3px;
    border: 1px solid #a4a2ad;
    background: #f3f0f4;
    box-shadow: 0 3px 8px rgba(40, 30, 60, 0.35);
    color: #0c0b14;
    font-size: 14px;
  }

  .dlgtitle {
    display: flex;
    align-items: center;
    gap: 7px;
    height: 38px;
    padding: 0 14px 0 9px;
    background: #fff;
    color: #97959f;
  }

  .dlgtitle button {
    margin-left: auto;
  }

  .mini {
    border-bottom: 3px solid #0063a6;
    padding-bottom: 1px;
  }

  .dlgbody {
    margin: 9px 5px;
    padding: 8px 3px 3px;
    border: 1px solid #dedbe1;
  }

  p {
    margin: 0 0 10px;
    padding-left: 3px;
    white-space: nowrap;
  }

  .lists {
    display: flex;
    justify-content: space-between;
  }

  .lists label {
    display: block;
    height: 27px;
    padding-left: 2px;
  }

  .listbox {
    display: flex;
    width: 188px;
    height: 140px;
    padding: 1px;
    border: 1px solid #7a7883;
    background: #fff;
  }

  .listbox select {
    flex: 1;
    padding-top: 1px;
    overflow: hidden;
    font: 15px/17px 'Liberation Mono', monospace;
  }

  .listbox option {
    height: 17px;
    min-height: 17px;
    padding: 0 2px;
    line-height: 17px;
  }

  .scroll {
    display: flex;
    flex-direction: column;
    align-items: center;
    width: 20px;
    padding: 7px 0;
    background: #f0eef2;
  }

  .scroll i {
    width: 100%;
    height: 68px;
    margin: 8px 0 auto;
    background: #cac8cd;
  }

  .moves {
    display: flex;
    flex-direction: column;
    gap: 6px;
    padding-top: 59px;
  }

  .btn {
    width: 82px;
    height: 28px;
    background: #e3e0e5;
    border: 1px solid #adabb4;
    display: block;
  }

  .btn.slim {
    display: flex;
    height: 19px;
  }

  .btn.ok {
    margin-left: 3px;
  }

  .cursor {
    position: absolute;
    left: 657px;
    top: -5px;
  }

  /* bottom toolbars */
  .bars {
    position: relative;
    display: flex;
    align-items: flex-start;
    flex: none;
    height: 74px;
    border-top: 1px solid var(--grey);
    gap: 1px;
    font-size: 14px;
  }

  .bar {
    height: 70px;
    padding: 3px;
    border: 1px solid #cfccda;
  }

  .grip {
    width: 6px;
    height: 70px;
    background: #cfccda;
  }

  .line {
    display: flex;
    align-items: center;
    gap: 2px;
  }

  .origin {
    width: 172px;
  }

  .origin .line {
    justify-content: space-between;
    margin-bottom: 4px;
  }

  .withicon {
    display: flex;
    align-items: center;
    width: 130px;
    margin-left: 4px;
    padding-left: 3px;
    background: #fff;
    border: 1px solid #e2deea;
  }

  .withicon .combo {
    flex: 1;
    height: 24px;
    border: 0;
  }

  .withicon select {
    padding-left: 2px;
  }

  .withicon .caret {
    right: 7px;
  }

  .off {
    width: 25px;
    height: 29px;
    background: #b0aeb6;
  }

  .off:disabled {
    color: #cfcdd6;
  }

  .find {
    width: 226px;
  }

  .find .line {
    gap: 10px;
    height: 30px;
  }

  .find input {
    flex: 1;
    min-width: 0;
    height: 26px;
    padding-left: 3px;
    margin-left: 2px;
    background: #fff;
    border: 1px solid #e2deea;
  }

  .find :global(.lens) {
    width: 16px;
    height: 16px;
    margin-right: 4px;
  }

  .find :global(.area) {
    margin: 8px 3px;
  }

  .bar.select {
    display: flex;
    align-items: center;
    width: 738px;
    height: 66px;
    padding: 2px 2px 2px 1px;
  }

  .rows {
    flex: 1;
    align-self: flex-start;
  }

  .second {
    height: 30px;
    margin-top: 3px;
  }

  .sw {
    width: 25px;
    height: 25px;
  }

  .sw.on {
    background: var(--grey);
  }

  .sep {
    width: 2px;
    height: 28px;
    background: #cfccda;
  }

  .rows .line:first-child .sep {
    height: 25px;
  }

  .filter {
    width: 92px;
    margin: 0 4px;
  }

  .filter .caret {
    right: 14px;
  }

  :global(.eyesmall) {
    width: 16px;
    height: 10px;
    margin-right: 4px;
  }

  .snap {
    width: 556px;
    height: 72px;
    padding: 5px 1px;
  }

  .auto {
    width: 66px;
    margin: 0 6px 0 3px;
  }

  .plane {
    width: 112px;
  }

  .plane .caret {
    right: 18px;
  }

  .outline {
    width: 129px;
    margin: 6px 0 0 4px;
  }

  .badge {
    position: absolute;
    right: 40px;
    top: 2px;
    display: flex;
    align-items: center;
    justify-content: center;
    width: 247px;
    height: 78px;
    border: 2px solid #3fb8a8;
    border-radius: 8px;
    background: rgba(20, 140, 72, 0.72);
    color: #fdf05a;
    font: 700 42px/78px Inter, sans-serif;
    z-index: 1;
  }

  .badge span {
    position: relative;
  }

  .badge :global(.eyesmall) {
    position: absolute;
    left: 64px;
    top: 28px;
    color: #1f6b3b;
    opacity: 0.6;
  }

  .status {
    display: flex;
    flex: none;
    justify-content: flex-end;
    height: 27px;
    padding: 4px 124px 0 0;
    background: var(--blue);
    color: #fff;
    font-size: 18px;
    line-height: 23px;
    white-space: nowrap;
  }

  .status span {
    margin-left: 8px;
  }

  .status span:nth-child(2) {
    margin-left: 118px;
  }

  .status span:nth-child(4) {
    margin-left: 32px;
  }

  .status span:nth-child(5) {
    margin-left: 60px;
  }
</style>
